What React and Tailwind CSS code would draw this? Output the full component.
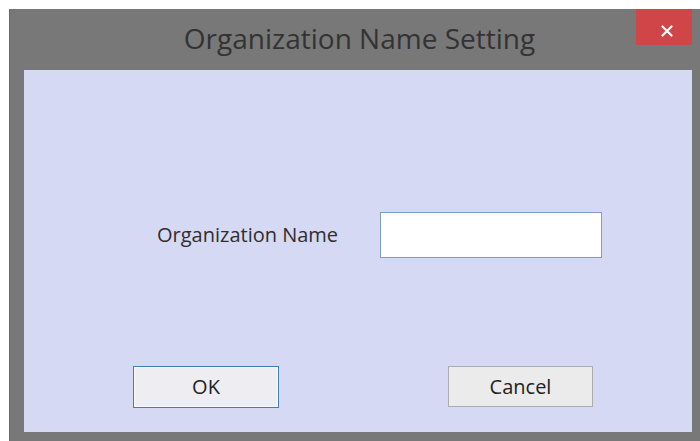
import React from "react";

const font = { fontFamily: '"Open Sans", "Noto Sans", sans-serif' };

export default function App() {
  return (
    <div className="w-[700px] h-[441px] bg-white pt-[9px] pl-[9px]" style={font}>
      <div className="w-[691px] h-[432px] bg-[#787878] flex flex-col border-l border-[#6a6a6a]">
        {/* title bar */}
        <div className="h-[61px] flex">
          <div className="flex-1 pl-[73px] pt-[12px] text-center text-[28px] leading-[34px] text-[#333333] whitespace-nowrap">
            Organization Name Setting
          </div>
          <button className="w-[56px] h-[36px] mr-[8px] bg-[#cf4548] flex items-center justify-center pl-[6px] pt-[8px]">
            <svg width="12" height="12" viewBox="0 0 12 12">
              <path d="M1.5 1.5 L10.5 10.5 M10.5 1.5 L1.5 10.5" stroke="#ffffff" strokeWidth="2.2" strokeLinecap="round" />
            </svg>
          </button>
        </div>

        {/* dialog body */}
        <div className="flex-1 ml-[14px] mr-[8px] mb-[9px] bg-[#d6d9f3] flex flex-col">
          <div className="flex items-center mt-[142px] ml-[133px]">
            <span className="text-[20px] text-[#2e2e2e] w-[223px] whitespace-nowrap">Organization Name</span>
            <input
              type="text"
              className="w-[222px] h-[46px] bg-white border border-[#7d9cc8] outline-none"
            />
          </div>
          <div className="flex mt-[108px] ml-[109px]">
            <button className="w-[146px] h-[42px] border border-[#3d7fb6] bg-[#eeedf1] shadow-[inset_0_0_0_1px_#f7f9fc] text-[20px] text-[#222222]">
              OK
            </button>
            <button className="w-[145px] h-[41px] ml-[169px] border border-[#acacac] bg-[#ebebeb] text-[20px] text-[#222222]">
              Cancel
            </button>
          </div>
        </div>
      </div>
    </div>
  );
}
